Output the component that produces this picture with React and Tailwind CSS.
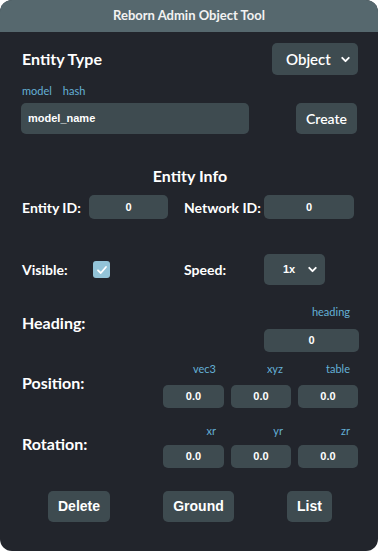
import { ChevronDown } from "lucide-react"

const lato = { fontFamily: "Lato, 'Noto Sans', sans-serif" }

function Field({ value, className = "" }) {
  return (
    <div
      className={`flex items-center justify-center rounded-[5px] bg-[#3e4b50] text-[11px] font-bold text-white font-['Liberation_Sans',Arial,sans-serif] ${className}`}
    >
      {value}
    </div>
  )
}

function Tag({ children }) {
  return <span className="text-[11px] text-[#64b0d6] leading-5">{children}</span>
}

function VecBlock({ labels, values, gap }) {
  return (
    <div className="flex flex-col">
      <div className="flex gap-[7px]">
        {labels.map((l, i) => (
          <div key={l} className={`${i === 0 ? "w-[61px]" : "w-[60px]"} text-right pr-[8px]`}>
            <Tag>{l}</Tag>
          </div>
        ))}
      </div>
      <div className={`flex gap-[7px] ${gap}`}>
        {values.map((v, i) => (
          <Field key={i} value={v} className={`${i === 0 ? "w-[61px]" : "w-[60px]"} h-[23px]`} />
        ))}
      </div>
    </div>
  )
}

export default function App() {
  return (
    <div className="w-[378px] h-[551px] bg-white" style={lato}>
      <div className="h-full rounded-[12px] overflow-hidden bg-[#22252c] text-white">
        <div className="h-8 bg-[#56686e] flex items-center justify-center text-[13px] font-bold text-[#f2f2f2]">
          Reborn Admin Object Tool
        </div>

        <div className="pl-[22px] pr-[20px]">
          {/* entity type */}
          <div className="flex items-center justify-between mt-[11px]">
            <span className="text-[16px] font-bold">Entity Type</span>
            <div className="w-[86px] h-8 rounded-[5px] bg-[#3e4b50] flex items-center pl-[14px] pr-[6px] justify-between">
              <span className="text-[15px] font-semibold">Object</span>
              <ChevronDown size={13} strokeWidth={3.5} />
            </div>
          </div>

          <div className="flex gap-[11px] mt-[6px]">
            <Tag>model</Tag>
            <Tag>hash</Tag>
          </div>
          <div className="flex items-center justify-between mt-[2px] -ml-px">
            <div className="w-[228px] h-[31px] rounded-[5px] bg-[#3e4b50] flex items-center pl-[7px] text-[11px] font-bold font-['Liberation_Sans',Arial,sans-serif]">
              model_name
            </div>
            <div className="w-[61px] h-[31px] rounded-[5px] bg-[#3e4b50] flex items-center justify-center text-[14px] font-semibold mr-px">
              Create
            </div>
          </div>

          {/* entity info */}
          <div className="text-center text-[16px] font-bold mt-[32px] leading-5">Entity Info</div>
          <div className="flex items-center mt-[9px]">
            <span className="w-[67px] text-[14px] font-bold">Entity ID:</span>
            <Field value="0" className="w-[79px] h-6" />
            <span className="w-[80px] ml-[16px] text-[14px] font-bold">Network ID:</span>
            <Field value="0" className="w-[90px] h-6" />
          </div>

          <div className="flex items-center mt-[35px]">
            <span className="w-[71px] text-[14px] font-bold">Visible:</span>
            <div className="w-[17px] h-[17px] rounded-[3px] bg-[#93c4d8] flex items-center justify-center">
              <svg width="12" height="12" viewBox="0 0 12 12" fill="none">
                <path d="M2 6.3 L4.8 9 L10 3" stroke="white" strokeWidth="1.8" strokeLinecap="round" strokeLinejoin="round" />
              </svg>
            </div>
            <span className="w-[80px] ml-[74px] text-[14px] font-bold">Speed:</span>
            <div className="w-[61px] h-[31px] rounded-[5px] bg-[#3e4b50] flex items-center justify-between pl-[19px] pr-[6px]">
              <span className="text-[11px] font-bold font-['Liberation_Sans',Arial,sans-serif]">1x</span>
              <ChevronDown size={13} strokeWidth={3.5} />
            </div>
          </div>

          {/* heading */}
          <div className="flex items-center justify-between mt-[13px]">
            <span className="text-[16px] font-bold mt-[-4px]">Heading:</span>
            <div className="flex flex-col items-end">
              <div className="pr-[8px]">
                <Tag>heading</Tag>
              </div>
              <Field value="0" className="w-[95px] h-[23px] mt-[7px] -mr-px" />
            </div>
          </div>

          <div className="flex items-center justify-between mt-[3px]">
            <span className="text-[16px] font-bold mt-[3px]">Position:</span>
            <VecBlock labels={["vec3", "xyz", "table"]} values={["0.0", "0.0", "0.0"]} gap="mt-[6px]" />
          </div>

          <div className="flex items-center justify-between mt-[9px]">
            <span className="text-[16px] font-bold mt-[2px]">Rotation:</span>
            <VecBlock labels={["xr", "yr", "zr"]} values={["0.0", "0.0", "0.0"]} gap="mt-[4px]" />
          </div>

          {/* actions */}
          <div className="flex mt-[23px] text-[14px] font-bold font-['Liberation_Sans',Arial,sans-serif]">
            <div className="ml-[26px] w-[62px] h-[31px] rounded-[5px] bg-[#3e4b50] flex items-center justify-center">Delete</div>
            <div className="ml-[53px] w-[71px] h-[31px] rounded-[5px] bg-[#3e4b50] flex items-center justify-center">Ground</div>
            <div className="ml-[53px] w-[45px] h-[31px] rounded-[5px] bg-[#3e4b50] flex items-center justify-center">List</div>
          </div>
        </div>
      </div>
    </div>
  )
}
